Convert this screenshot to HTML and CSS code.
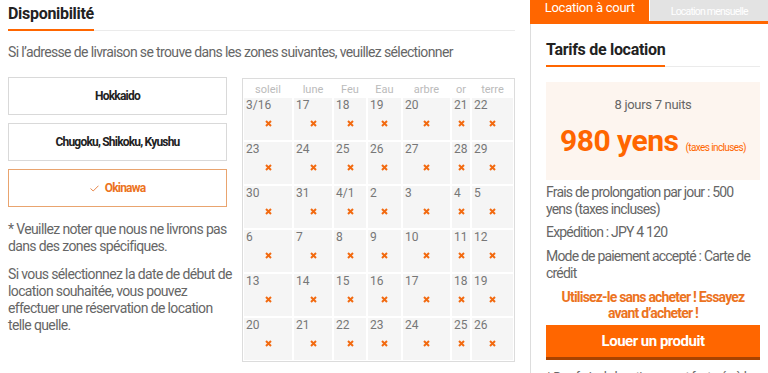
FILE: index.html
```html
<!DOCTYPE html>
<html lang="fr">
<head>
  <meta charset="UTF-8">
  <meta name="viewport" content="width=device-width, initial-scale=1.0">
  <title>Disponibilité</title>
  <link rel="stylesheet" href="styles.css">
</head>
<body>

  <div class="page">

    <!-- Availability -->
    <section class="avail">
      <h2 class="sec-title"><span>Disponibilité</span></h2>
      <p class="lead">Si l’adresse de livraison se trouve dans les zones suivantes, veuillez sélectionner</p>

      <div class="avail-body">
        <div class="zones">
          <div class="zone">Hokkaido</div>
          <div class="zone">Chugoku, Shikoku, Kyushu</div>
          <div class="zone selected">
            <svg class="check" width="9" height="7" viewBox="0 0 9 7"><polyline points="0.5,3.5 3.2,6 8.5,0.7" fill="none" stroke="#e8874a" stroke-width="1"/></svg>
            Okinawa
          </div>
          <p class="note first">* Veuillez noter que nous ne livrons pas dans des zones spécifiques.</p>
          <p class="note">Si vous sélectionnez la date de début de location souhaitée, vous pouvez effectuer une réservation de location telle quelle.</p>
        </div>

        <div class="calendar">
          <div class="cal-head">soleil</div>
          <div class="cal-head">lune</div>
          <div class="cal-head">Feu</div>
          <div class="cal-head">Eau</div>
          <div class="cal-head">arbre</div>
          <div class="cal-head">or</div>
          <div class="cal-head">terre</div>
        </div>
      </div>
    </section>

    <!-- Rental prices -->
    <aside class="rental">
      <div class="tabs">
        <div class="tab active">Location à court</div>
        <div class="tab">Location mensuelle</div>
      </div>

      <div class="rental-body">
        <h2 class="sec-title"><span>Tarifs de location</span></h2>

        <div class="price-box">
          <p class="duration">8 jours 7 nuits</p>
          <p class="price">980 yens <small>(taxes incluses)</small></p>
        </div>

        <p class="info">Frais de prolongation par jour : 500 yens (taxes incluses)</p>
        <p class="info">Expédition : JPY 4 120</p>
        <p class="info pay">Mode de paiement accepté : Carte de crédit</p>

        <p class="promo">Utilisez-le sans acheter ! Essayez avant d’acheter !</p>
        <button class="rent-btn">Louer un produit</button>
        <p class="footnote">* Des frais de location seront facturés à la date de début.</p>
      </div>
    </aside>

  </div>

  <script>
    // fill the calendar: every day is unavailable
    const days = ["3/16", 17, 18, 19, 20, 21, 22, 23, 24, 25, 26, 27, 28, 29, 30, 31,
      "4/1", 2, 3, 4, 5, 6, 7, 8, 9, 10, 11, 12, 13, 14, 15, 16, 17, 18, 19,
      20, 21, 22, 23, 24, 25, 26];
    const calendar = document.querySelector(".calendar");

    days.forEach(function (day) {
      const cell = document.createElement("div");
      cell.className = "cal-day";
      cell.innerHTML = '<span class="date">' + day + '</span>' +
        '<svg class="cross" width="7" height="7" viewBox="0 0 7 7">' +
        '<path d="M1 1L6 6M6 1L1 6" stroke="#f26a10" stroke-width="2"/></svg>';
      calendar.appendChild(cell);
    });
  </script>
</body>
</html>
```

FILE: styles.css
```css
/* General */
body, html {
  margin: 0;
  padding: 0;
  overflow: hidden;
  background-color: #fff;
  font-family: Roboto, "Liberation Sans", sans-serif;
  letter-spacing: -0.05em;
  color: #666;
}

p {
  margin: 0;
}

.page {
  display: flex;
  gap: 15px;
  padding-left: 8px;
}

/* Section titles */
.sec-title {
  margin: 0;
  padding-top: 4px;
  font-size: 16px;
  line-height: 20px;
  font-weight: 700;
  letter-spacing: -0.3px;
  color: #222;
  border-bottom: 1px solid #ebebeb;
}

.sec-title span {
  display: inline-block;
  padding-bottom: 5px;
  margin-bottom: -1px;
  border-bottom: 2px solid #ff6600;
}

/* Availability */
.avail {
  width: 507px;
  flex-shrink: 0;
}

.lead {
  margin-top: 13px;
  font-size: 14px;
  line-height: 17px;
  letter-spacing: -0.045em;
}

.avail-body {
  display: flex;
  gap: 15px;
  margin-top: 16px;
}

.zones {
  width: 219px;
  display: flex;
  flex-direction: column;
  gap: 8px;
}

.zone {
  height: 38px;
  box-sizing: border-box;
  border: 1px solid #d9d9d9;
  display: flex;
  align-items: center;
  justify-content: center;
  gap: 6px;
  font-size: 12px;
  font-weight: 700;
  color: #222;
}

.zone.selected {
  border-color: #e9a46f;
  color: #ec7322;
}

.note {
  font-size: 14px;
  line-height: 17px;
  letter-spacing: -0.045em;
  width: 224px;
}

.note.first {
  margin-top: 6px;
}

.note + .note {
  margin-top: 3px;
}

/* Calendar */
.calendar {
  margin-top: 1px;
  align-self: flex-start;
  display: grid;
  grid-template-columns: 48px 38px 32px 33px 47px 18px 41px;
  grid-auto-rows: 42px;
  grid-template-rows: 17px;
  gap: 2px;
  padding: 0 1px 1px;
  border: 1px solid #dcdcdc;
  letter-spacing: 0;
}

.cal-head {
  padding-top: 4px;
  font-size: 11px;
  line-height: 13px;
  color: #bbb;
  text-align: center;
}

.cal-day {
  display: flex;
  flex-direction: column;
  background-color: #f5f5f5;
}

.cal-day .date {
  padding-left: 2px;
  font-size: 12px;
  line-height: 14px;
  color: #777;
}

.cal-day .cross {
  margin: 8px auto 0;
}

/* Rental panel */
.rental {
  width: 238px;
  flex-shrink: 0;
}

.tabs {
  display: flex;
  align-items: flex-start;
  border-bottom: 3px solid #ff6600;
}

.tab {
  height: 21px;
  width: 122px;
  text-align: center;
  color: #fff;
}

.tab.active {
  background-color: #ff6600;
  font-size: 13px;
  line-height: 15px;
  letter-spacing: -0.02em;
}

.tab + .tab {
  margin-left: 1px;
  width: 120px;
  background-color: #e3e3e3;
  font-size: 10.5px;
  line-height: 16px;
  padding-top: 4px;
  box-sizing: border-box;
}

.rental-body {
  border-left: 1px solid #ddd;
  padding: 12px 8px 0 15px;
}

.price-box {
  margin-top: 15px;
  padding: 15px 0 14px;
  background-color: #fdf5ef;
  text-align: center;
}

.duration {
  font-size: 13px;
  line-height: 16px;
  letter-spacing: -0.3px;
}

.price {
  margin-top: 10px;
  font-size: 30px;
  line-height: 36px;
  font-weight: 700;
  letter-spacing: -0.5px;
  color: #ff6600;
}

.price small {
  font-size: 10px;
  font-weight: 400;
  letter-spacing: -0.6px;
}

.info {
  margin-top: 6px;
  font-size: 14px;
  line-height: 17px;
}

.price-box + .info {
  margin-top: 4px;
}

.info.pay {
  margin-top: 7px;
}

.promo {
  margin-top: 7px;
  font-size: 14px;
  line-height: 16px;
  font-weight: 700;
  color: #ec7322;
  text-align: center;
}

.rent-btn {
  display: block;
  width: 100%;
  height: 35px;
  margin-top: 4px;
  border: none;
  border-bottom: 3px solid #a94300;
  background-color: #ff6600;
  color: #fff;
  font-family: inherit;
  font-size: 15px;
  font-weight: 700;
  letter-spacing: -0.5px;
}

.footnote {
  margin-top: 9px;
  font-size: 13px;
  line-height: 16px;
}
```
